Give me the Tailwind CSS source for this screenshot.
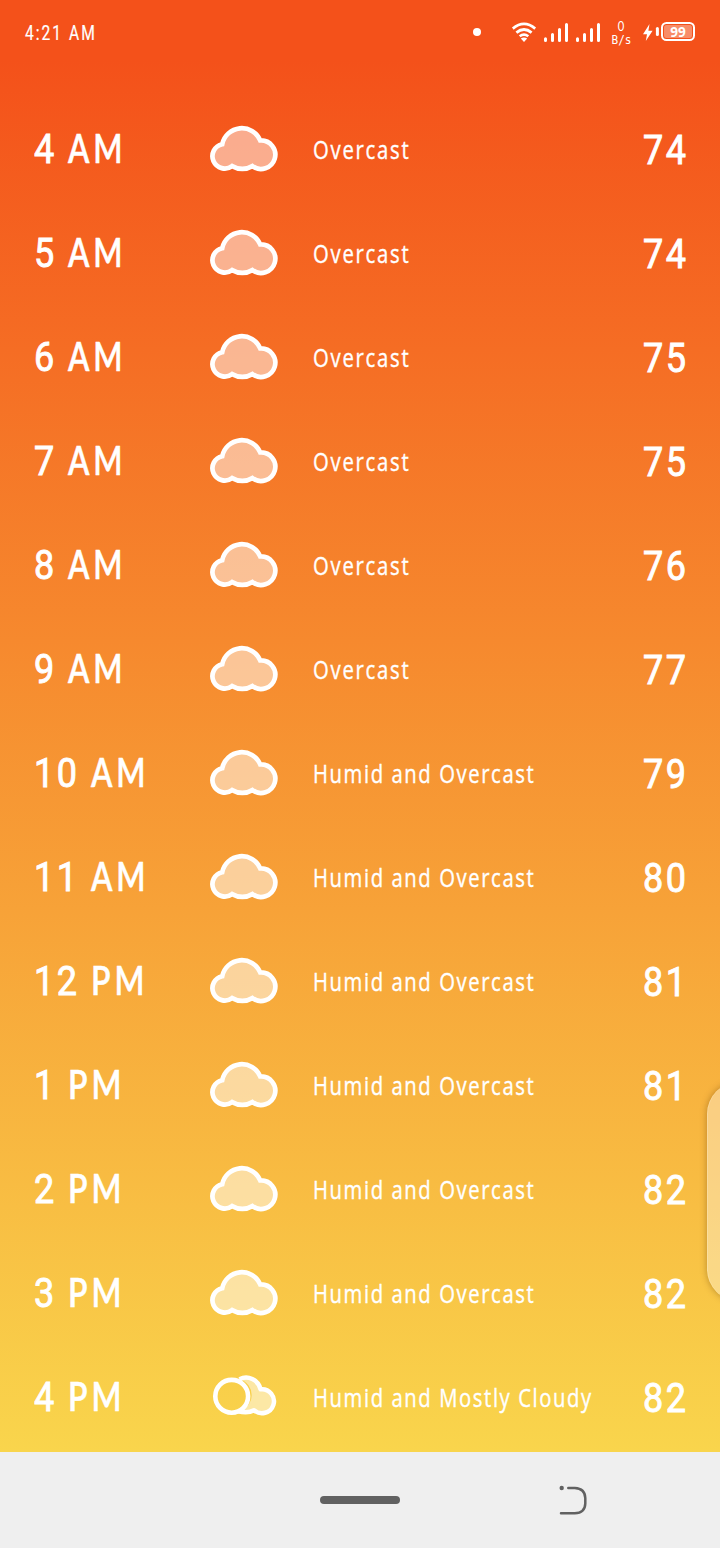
<!DOCTYPE html>
<html lang="en">
<head>
<meta charset="utf-8">
<title>Hourly forecast</title>
<script src="https://cdn.jsdelivr.net/npm/@tailwindcss/browser@4"></script>
</head>
<body class="w-[720px] h-[1548px] overflow-hidden flex flex-col text-white font-['Lato','Open_Sans',sans-serif]">
<svg class="hidden">
  <symbol id="cloud" viewBox="0 0 72 50"><path d="M14.2 20.2A20 20 0 0 1 52.2 16.4A14.3 14.3 0 1 1 44.4 42.1Q34.4 47.8 24.1 42.1A12.3 12.3 0 1 1 14.2 20.2Z" fill="#fff" fill-opacity=".5" stroke="#fff" stroke-width="4.7" stroke-linejoin="miter"/></symbol>
  <symbol id="mostly" viewBox="0 0 72 50"><path d="M31.5 7.2C40 3 50 7.5 52.6 17.3A12 12 0 1 1 46 38.2Q40 41.6 30 39.2A16.4 16.4 0 0 0 31.5 7.2Z" fill="#fff" fill-opacity=".5"/><path d="M31.5 7.2C40 3 50 7.5 52.6 17.3A12 12 0 1 1 46 38.2Q40 41.6 30 39.2" fill="none" stroke="#fff" stroke-width="4.5" stroke-linejoin="round"/><circle cx="23.7" cy="24.3" r="16.4" fill="none" stroke="#fff" stroke-width="4.6"/></symbol>
</svg>
<main class="relative h-[1452px] shrink-0 overflow-hidden bg-[linear-gradient(180deg,#f4511a_60px,#f6892e_640px,#f9d54c_1452px)]">
  <header class="flex h-[97px] items-start pl-[25px] pr-[25px]">
    <div class="mt-[22px] w-[100px] font-['Roboto'] text-[19.5px] leading-[24px] tracking-[2.5px] whitespace-nowrap [-webkit-text-stroke:0.2px_white]"><span class="inline-block origin-left scale-x-[0.80]">4:21 AM</span></div>
    <svg class="ml-auto mt-[16px] shrink-0" width="225" height="32" viewBox="470 16 225 32" fill="none" stroke="#fff">
      <circle cx="477" cy="32" r="4" fill="#fff" stroke="none"/>
      <g stroke-width="2.7"><path d="M512.8 28.6Q524 19.2 535.2 28.6"/><path d="M516.4 32.6Q524 26.4 531.6 32.6"/><path d="M519.7 36.3Q524 32.8 528.3 36.3"/></g>
      <path d="M520.8 38.5Q524 36.3 527.2 38.5L524 42Z" fill="#fff" stroke="none"/>
      <g stroke-width="3" stroke-linecap="round"><path d="M545.5 38.8V40.4M552.5 34.5V40.4M559.5 29.5V40.4M566.5 24.5V40.4M577.5 38.8V40.4M584.5 34.5V40.4M591.5 29.5V40.4M598.5 24.5V40.4"/></g>
      <path d="M649.5 24L643 34.2H647L645.8 41L652.6 30.8H648.4Z" fill="#fff" stroke="none"/>
      <path d="M657.4 28.5V34.5" stroke-width="3" stroke-linecap="round"/>
      <rect x="662" y="23" width="32" height="17" rx="4.5" stroke-width="2"/>
      <rect x="664" y="25" width="28" height="13" rx="2.5" fill="#fff" fill-opacity=".35" stroke="none"/>
      <g fill="#fff" stroke="none" text-anchor="middle"><text x="621" y="30.5" class="text-[13px] font-['Lato']" textLength="6.5" lengthAdjust="spacingAndGlyphs">0</text><text x="621.5" y="44" class="text-[13px] font-['DejaVu_Sans_Mono']" textLength="20" lengthAdjust="spacingAndGlyphs">B/s</text><text x="678" y="37" class="text-[15px] font-bold font-['Open_Sans']" textLength="15.5" lengthAdjust="spacingAndGlyphs">99</text></g>
    </svg>
  </header>
  <div id="rows" class="flex flex-col"></div>
  <div class="absolute left-[707px] top-[1082px] h-[219px] w-[70px] rounded-[32px] border-l border-white/20 bg-white/35 shadow-[0_0_7px_rgba(90,50,0,0.4)]"></div>
</main>
<nav class="relative h-[96px] flex items-center justify-center bg-[#efefef]">
  <div class="h-2 w-20 rounded-full bg-[#616161]"></div>
  <svg class="absolute left-[556px] top-[31px]" width="34" height="34" fill="none" stroke="#616161" stroke-width="2.5" stroke-linecap="round"><circle cx="5.7" cy="5" r="2.2" fill="#616161" stroke="none"/><path d="M12.3 5H18.8Q29 5.5 29.3 15V20.5Q29 30 18.8 30.3H5"/></svg>
</nav>
<script>
const oc='Overcast', ho='Humid and Overcast', hm='Humid and Mostly Cloudy';
const data=[['4','AM',oc,74],['5','AM',oc,74],['6','AM',oc,75],['7','AM',oc,75],['8','AM',oc,76],['9','AM',oc,77],['10','AM',ho,79],['11','AM',ho,80],['12','PM',ho,81],['1','PM',ho,81],['2','PM',ho,82],['3','PM',ho,82],['4','PM',hm,82]];
const fit={[oc]:'tracking-[2.2px]',[ho]:'tracking-[2px]',[hm]:'tracking-[2px]'};
document.getElementById('rows').innerHTML=data.map(([h,p,c,t])=>`
<div class="flex h-[104px] items-center pl-[34px]">
  <div class="flex w-[174px] text-[40px] leading-[48px] font-semibold [-webkit-text-stroke:0.5px_white]">
    <span class="pt-0.5 font-['Roboto'] font-normal [-webkit-text-stroke:0.9px_white] ${h.length>1?'w-[57px]':'w-[34px]'}"><span class="inline-block origin-left scale-x-[0.90] tracking-[2.8px]">${h}</span></span>
    <span class="inline-block origin-left ${p==='PM'?'scale-x-[0.80]':'scale-x-[0.78]'} tracking-[5px]">${p}</span>
  </div>
  <svg class="h-[50px] w-[72px] shrink-0"><use href="#${c===hm?'mostly':'cloud'}"/></svg>
  <div class="ml-[33px] w-[330px] -mt-px whitespace-nowrap font-['Open_Sans'] text-[25.5px] leading-[32px] font-medium [-webkit-text-stroke:0.4px_white]"><span class="inline-block origin-left scale-x-[0.795] ${fit[c]}">${c}</span></div>
  <div class="pt-[3px] text-[40px] leading-[48px] font-['Roboto'] font-normal [-webkit-text-stroke:0.9px_white]"><span class="inline-block origin-left scale-x-[0.90] tracking-[2.8px]">${t}</span></div>
</div>`).join('');
</script>
</body>
</html>
